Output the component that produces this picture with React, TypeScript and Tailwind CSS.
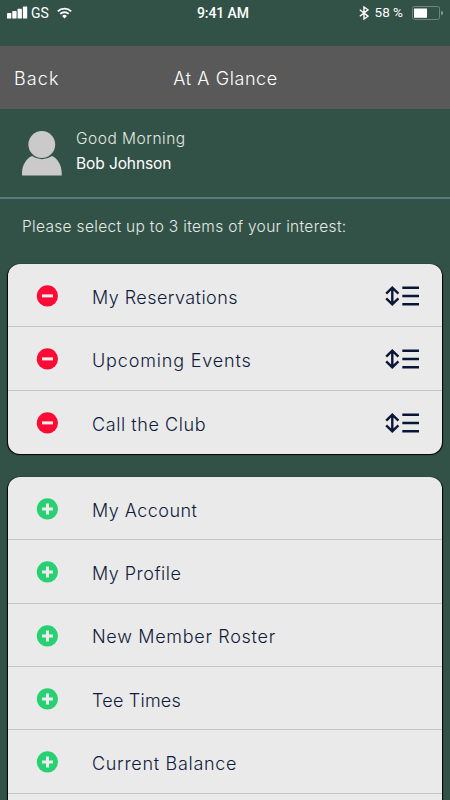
import React from 'react';

interface GlanceItem {
  id: string;
  label: string;
  tracking: string;
}

const selectedItems: GlanceItem[] = [
  { id: 'reservations', label: 'My Reservations', tracking: 'tracking-[0.44px]' },
  { id: 'events', label: 'Upcoming Events', tracking: 'tracking-[0.84px]' },
  { id: 'call', label: 'Call the Club', tracking: 'tracking-[0.57px]' },
];

const availableItems: GlanceItem[] = [
  { id: 'account', label: 'My Account', tracking: 'tracking-[0.47px]' },
  { id: 'profile', label: 'My Profile', tracking: 'tracking-[0.49px]' },
  { id: 'roster', label: 'New Member Roster', tracking: 'tracking-[0.7px]' },
  { id: 'tee', label: 'Tee Times', tracking: 'tracking-[0.22px]' },
  { id: 'balance', label: 'Current Balance', tracking: 'tracking-[0.7px]' },
  { id: 'statements', label: '', tracking: 'tracking-normal' },
];

const StatusBar: React.FC = () => (
  <div className="grid h-[46px] shrink-0 grid-cols-[197px_1fr_auto] items-start pl-[7px] pr-[6px] pt-[5px] font-[Roboto,sans-serif] text-white">
    <div className="flex h-[15px] items-center">
      <svg width="21" height="13" viewBox="0 0 21 13" fill="currentColor">
        <rect x="0" y="7" width="4.3" height="5.5" rx="0.6" />
        <rect x="5.3" y="5" width="4.3" height="7.5" rx="0.6" />
        <rect x="10.6" y="2.7" width="4.3" height="9.8" rx="0.6" />
        <rect x="15.9" y="0.5" width="4.3" height="12" rx="0.6" />
      </svg>
      <span className="ml-[3px] mt-[2px] text-[14px] leading-[15px]">GS</span>
      <svg className="ml-[8px]" width="15" height="12" viewBox="0 0 15 12" fill="none" stroke="currentColor" strokeWidth="1.9">
        <path d="M0.8 4.4 A9.5 9.5 0 0 1 14.2 4.4" />
        <path d="M3.3 6.9 A6 6 0 0 1 11.7 6.9" />
        <path d="M5.1 8.9 A3.5 3.5 0 0 1 9.9 8.9 L7.5 11.4 Z" fill="currentColor" stroke="none" />
      </svg>
    </div>
    <span className="-ml-[7px] whitespace-nowrap text-[14px] font-medium leading-[16px] tracking-[-0.1px]">9:41 AM</span>
    <div className="flex h-[15px] items-center">
      <svg width="10" height="14" viewBox="0 0 10 14" fill="none" stroke="currentColor" strokeWidth="1.4">
        <path d="M0.8 3.7 L9 10.2 L5 13 V1 L9 3.8 L0.8 10.3" />
      </svg>
      <span className="ml-[6px] text-[13.5px] leading-[15px]">58 %</span>
      <svg className="ml-[9px]" width="32" height="14" viewBox="0 0 32 14">
        <rect x="0.5" y="0.5" width="27" height="13" rx="2" fill="none" stroke="#7f9389" strokeWidth="0.8" />
        <rect x="2" y="2.5" width="13" height="9.3" fill="#fff" />
        <path d="M29.3 4.8 Q31 5.4 31 7 T29.3 9.2 Z" fill="#9aaaa2" />
      </svg>
    </div>
  </div>
);

const RemoveIcon: React.FC = () => (
  <svg width="22" height="22" viewBox="0 0 22 22">
    <circle cx="11.4" cy="10.9" r="10.6" fill="#fb0b35" />
    <rect x="6" y="9.4" width="11" height="3" fill="#ececec" />
  </svg>
);

const AddIcon: React.FC = () => (
  <svg width="22" height="22" viewBox="0 0 22 22">
    <circle cx="11.4" cy="10.9" r="10.6" fill="#29d073" />
    <path d="M6 10.9 H17 M11.5 5.4 V16.4" stroke="#ececec" strokeWidth="3" />
  </svg>
);

const ReorderIcon: React.FC = () => (
  <svg width="35" height="20" viewBox="0 0 35 20" fill="none" stroke="#0a1634" strokeWidth="2.4">
    <path d="M7.3 1.5 V18.5 M1.2 7.6 L7.3 1.7 L13.4 7.6 M1.2 12.4 L7.3 18.3 L13.4 12.4" />
    <path d="M17.3 1.7 H34 M17.3 10 H34 M17.3 18.3 H34" strokeWidth="2.6" />
  </svg>
);

interface ItemRowProps {
  item: GlanceItem;
  selected?: boolean;
}

const ItemRow: React.FC<ItemRowProps> = ({ item, selected }) => (
  <li className="flex h-[63.33px] items-center border-b border-[#c5c5c5] pl-[28px] pr-[22px] pt-[2px] last:border-b-0">
    <button className="shrink-0">{selected ? <RemoveIcon /> : <AddIcon />}</button>
    <span className={`ml-[34px] flex-1 whitespace-nowrap pt-[2px] text-[18px] font-light text-[#101b3b] ${item.tracking}`}>
      {item.label}
    </span>
    {selected && <ReorderIcon />}
  </li>
);

export default function App() {
  return (
    <div className="flex h-[800px] w-[450px] flex-col overflow-hidden bg-[#325247] font-[Inter,sans-serif]">
      <StatusBar />

      {/* Title bar */}
      <header className="grid h-[62.5px] shrink-0 grid-cols-[1fr_auto_1fr] items-center bg-[#595959] px-[14px] pt-[2px] text-[18px] font-light text-white">
        <button className="text-left tracking-[1.1px]">Back</button>
        <h1 className="pl-[1px] tracking-[0.6px]">At A Glance</h1>
      </header>

      {/* Member greeting */}
      <section className="flex h-[90px] shrink-0 border-b-2 border-[#587a7d] pl-[22px] pt-[17px]">
        <svg className="mt-[4px]" width="40" height="46" viewBox="0 0 40 46" fill="#cacaca">
          <path d="M0 45.5 V43 C0 35 4.5 28.5 10 26 Q20 32.5 30 26 C35.5 28.5 39.7 35 39.7 43 V45.5 Z" />
          <circle cx="19.8" cy="14.5" r="13.4" />
        </svg>
        <div className="ml-[14px] text-[15.5px] leading-[25px]">
          <p className="font-light tracking-[0.5px] text-[#e3eae1]">Good Morning</p>
          <p className="tracking-[-0.1px] text-white">Bob Johnson</p>
        </div>
      </section>

      <p className="h-[65.5px] shrink-0 whitespace-nowrap pl-[22px] pt-[16px] text-[15.5px] font-light leading-[24px] tracking-[0.32px] text-[#e5e9e5]">
        Please select up to 3 items of your interest:
      </p>

      <ul className="mx-2 shrink-0 rounded-[12px] bg-[#eaeaea] shadow-[0_0.5px_1px_0.5px_#000]">
        {selectedItems.map((item) => (
          <ItemRow key={item.id} item={item} selected />
        ))}
      </ul>

      <ul className="mx-2 mt-[23px] shrink-0 rounded-t-[12px] bg-[#eaeaea] shadow-[0_0.5px_1px_0.5px_#000]">
        {availableItems.map((item) => (
          <ItemRow key={item.id} item={item} />
        ))}
      </ul>
    </div>
  );
}
